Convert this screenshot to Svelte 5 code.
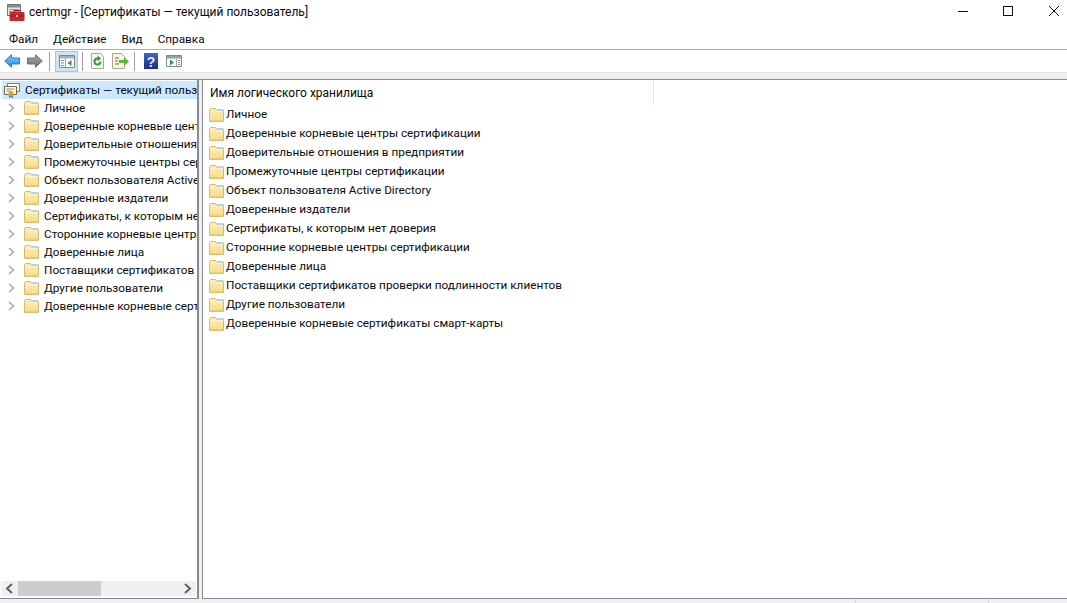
<script>
  const tree = ['Личное','Доверенные корневые центры сертификации','Доверительные отношения в предприятии','Промежуточные центры сертификации','Объект пользователя Active Directory','Доверенные издатели','Сертификаты, к которым нет доверия','Сторонние корневые центры сертификации','Доверенные лица','Поставщики сертификатов проверки подлинности клиентов','Другие пользователи','Доверенные корневые сертификаты смарт-карты'];
  const menu = ['Файл','Действие','Вид','Справка'];
</script>

{#snippet folder()}
  <svg class="folder" width="15" height="14" viewBox="0 0 15 14">
    <path d="M.5 13.500V1.500l1-1h5l1 1.500h7v11.500z" fill="url(#fg)" stroke="#d6bb78"/>
    <path d="M8 1h6v2H8z" fill="#b4d3e8"/>
    <path d="M1 3.500h13" stroke="#fff3c8"/>
    <path d="M1 13h13" stroke="#e0c070"/>
  </svg>
{/snippet}

<svg class="defs" width="0" height="0" aria-hidden="true">
  <defs>
    <linearGradient id="fg" x1="0" y1="0" x2="0" y2="1"><stop offset="0" stop-color="#fbeeb8"/><stop offset="1" stop-color="#f7dc88"/></linearGradient>
    <linearGradient id="bl" x1="0" y1="0" x2="0" y2="1"><stop offset="0" stop-color="#8ed2fa"/><stop offset="1" stop-color="#1b86dc"/></linearGradient>
    <linearGradient id="gr" x1="0" y1="0" x2="0" y2="1"><stop offset="0" stop-color="#b0b0b0"/><stop offset="1" stop-color="#6c6c6c"/></linearGradient>
    <linearGradient id="hp" x1="0" y1="0" x2="0" y2="1"><stop offset="0" stop-color="#3f66c8"/><stop offset="1" stop-color="#16308a"/></linearGradient>
  </defs>
</svg>

<div class="win">
  <header class="title">
    <svg class="appicon" width="18" height="17" viewBox="0 0 18 17">
      <path d="M.5 .5h13v11H.5z" fill="#e8e8e8" stroke="#777"/>
      <path d="M1 1h12v2.500H1z" fill="#8a8a8a"/>
      <path d="M2 5.500h10M2 7.500h10" stroke="#9a9a9a"/>
      <path d="M7 9V6.500h6V9" fill="none" stroke="#8d1a1a"/>
      <rect x="2.500" y="8" width="15" height="9" rx="1" fill="#c62b2b"/>
      <path d="M3 12h14" stroke="#8d1a1a"/>
      <path d="M9 11h2v2H9z" fill="#e8b0a0"/>
    </svg>
    <span class="ttext">certmgr - [Сертификаты — текущий пользователь]</span>
    <div class="caption">
      <svg width="46" height="30" viewBox="0 0 46 30"><path d="M19 11.500h10" stroke="#111"/></svg>
      <svg width="46" height="30" viewBox="0 0 46 30"><rect x="18.500" y="6.500" width="9" height="9" fill="none" stroke="#111"/></svg>
      <svg width="36" height="30" viewBox="0 0 36 30"><path d="M18 6l10 10M28 6L18 16" stroke="#111"/></svg>
    </div>
  </header>

  <nav class="menu">
    {#each menu as m}<span>{m}</span>{/each}
  </nav>

  <div class="toolbar">
    <svg class="tb" width="16" height="14" viewBox="0 0 16 14"><path d="M.7 7L7.500.8V4h8v6h-8v3.200z" fill="url(#bl)" stroke="#2a7fc0"/></svg>
    <svg class="tb g1" width="16" height="14" viewBox="0 0 16 14"><path d="M15.300 7L8.500.8V4h-8v6h8v3.200z" fill="url(#gr)" stroke="#707070"/></svg>
    <i class="sep s1"></i>
    <div class="active">
      <svg width="16" height="13" viewBox="0 0 16 13"><path d="M.5 .5h15v12H.5z" fill="#fff" stroke="#7f8794"/><path d="M1 1h14v2.500H1z" fill="#aab0b8"/><path d="M2 5h3v1H2zM2 7.500h3v1H2zM2 10h3v1H2z" fill="#7f8794"/><path d="M6.500 3.500v9" stroke="#9aa0a8"/><path d="M12.500 5v6l-4-3z" fill="#2d9a3a"/></svg>
    </div>
    <i class="sep s2"></i>
    <svg class="tb g2" width="13" height="16" viewBox="0 0 13 16"><path d="M.5 .5h9l3 3v12H.5z" fill="#fbfbf3" stroke="#a5a5a0"/><path d="M6.500 4.500a4 4 0 1 0 4 4H8.500a2 2 0 1 1-2-2v2l3.500-3-3.500-3z" fill="#2c9c3c"/></svg>
    <svg class="tb g3" width="17" height="16" viewBox="0 0 17 16"><path d="M.5 .5h9l3 3v12H.5z" fill="#fbf6dc" stroke="#aaa69a"/><path d="M3 5h4M3 8h3M3 11h4" stroke="#666"/><path d="M7 7h5V4l5 4.500-5 4.500v-3H7z" fill="#5cb83c"/></svg>
    <i class="sep s3"></i>
    <svg class="tb g4" width="14" height="16" viewBox="0 0 14 16"><path d="M0 0h14v16H0z" fill="url(#hp)"/><text x="7" y="13.500" text-anchor="middle" fill="#e8ecff" class="q">?</text></svg>
    <svg class="tb g5" width="16" height="12" viewBox="0 0 16 12"><path d="M.5 .5h15v11H.5z" fill="#fff" stroke="#7f8794"/><path d="M1 1h14v2.500H1z" fill="#99a0a8"/><path d="M10.500 3.500v8" stroke="#9aa0a8"/><path d="M12 5h2v1h-2zM12 7h2v1h-2zM12 9h2v1h-2z" fill="#7f8794"/><path d="M4 4.500v6l4-3z" fill="#2d9a3a"/></svg>
  </div>
  <div class="strip"></div>

  <main class="panes">
    <section class="left">
      <div class="treewrap">
        <div class="root">
          <svg width="16" height="15" viewBox="0 0 16 15"><path d="M3.500 .5h12v8h-12z" fill="#fdf9ec" stroke="#8a7a50"/><path d="M.5 3.500h12v8H.5z" fill="#fdf8e8" stroke="#7a6a40"/><path d="M2.500 6h8M2.500 8h4" stroke="#888"/><path d="M5 11h4v4l-2-1-2 1z" fill="#3f7fc8"/><circle cx="7" cy="10.500" r="2.500" fill="#e8a020"/></svg>
          <span>Сертификаты — текущий пользователь</span>
        </div>
        {#each tree as t}
          <div class="node">
            <svg class="chev" width="7" height="10" viewBox="0 0 7 10"><path d="M1 1l4.500 4L1 9" fill="none" stroke="#a6a6a6" stroke-width="1.500"/></svg>
            {@render folder()}
            <span>{t}</span>
          </div>
        {/each}
      </div>
      <div class="hscroll">
        <svg width="17" height="15" viewBox="0 0 17 15"><path d="M11 3L6 7.500l5 4.500" fill="none" stroke="#606060" stroke-width="2"/></svg>
        <div class="track"><div class="thumb"></div></div>
        <svg width="17" height="15" viewBox="0 0 17 15"><path d="M6 3l5 4.500L6 12" fill="none" stroke="#606060" stroke-width="2"/></svg>
      </div>
    </section>
    <section class="right">
      <div class="colhead"><span>Имя логического хранилища</span></div>
      <div class="list">
        {#each tree as t}
          <div class="item">{@render folder()}<span>{t}</span></div>
        {/each}
      </div>
    </section>
  </main>
  <footer class="status"><i></i><i></i></footer>
</div>

<style>
  :global(body) { margin: 0; background: #fff; }
  .defs { position: absolute; }
  .win { width: 1067px; height: 603px; display: flex; flex-direction: column; overflow: hidden; font-family: Roboto, sans-serif; font-size: 11.75px; color: #0a0a0a; background: #f0f0f0; }
  .title { height: 30px; flex: none; background: #fff; display: flex; align-items: center; padding-left: 7px; font-size: 12px; }
  .appicon { margin-top: -5px; margin-right: 4px; flex: none; }
  .ttext { margin-top: -6px; }
  .caption { margin-left: auto; display: flex; align-self: flex-start; }
  .caption svg { display: block; }
  .menu { height: 17px; padding-bottom: 2px; flex: none; background: #fff; border-bottom: 1px solid #aeaeb4; display: flex; align-items: center; padding-left: 9px; gap: 15px; }
  .toolbar { height: 22px; flex: none; background: #fff; display: flex; align-items: center; border-bottom: 1px solid #e4e4e4; padding-left: 4px; }
  .tb { flex: none; display: block; }
  .g1 { margin-left: 7px; }
  .sep { width: 1px; height: 19px; background: #a0a0a0; flex: none; }
  .s1 { margin-left: 6px; }
  .active { width: 23px; height: 21px; margin-left: 5px; background: #cce4f7; border: 1px solid #9cc8ea; box-sizing: border-box; display: flex; align-items: center; justify-content: center; flex: none; }
  .s2 { margin-left: 4px; }
  .g2 { margin-left: 8px; }
  .g3 { margin-left: 8px; }
  .s3 { margin-left: 5px; }
  .g4 { margin-left: 9px; }
  .g5 { margin-left: 8px; }
  .q { font: bold 14px "Liberation Sans", sans-serif; }
  .strip { height: 6px; flex: none; background: #f0f0f0; border-bottom: 1px solid #8a8a94; }
  .panes { flex: 1; min-height: 0; display: flex; gap: 3px; }
  .left { width: 199px; box-sizing: border-box; flex: none; background: #fff; border-right: 2px solid #8a8a94; border-bottom: 1px solid #8a8a94; display: flex; flex-direction: column; }
  .right { flex: 1; background: #fff; border-left: 1px solid #8a8a94; border-bottom: 1px solid #8a8a94; min-width: 0; }
  .treewrap { flex: 1; min-height: 0; overflow: hidden; padding: 1px 0 0 2px; }
  .root { height: 18px; background: #cce8ff; display: flex; align-items: center; gap: 5px; padding-left: 2px; white-space: nowrap; overflow: hidden; }
  .root svg { flex: none; }
  .root span { margin-top: -1px; }
  .node { height: 18px; display: flex; align-items: center; white-space: nowrap; padding-left: 6px; }
  .chev { flex: none; margin-right: 9px; }
  .folder { flex: none; display: block; }
  .node span { margin-left: 5px; margin-top: -1px; }
  .hscroll { height: 15px; margin: 0 1px 2px 1px; background: #f0f0f0; display: flex; align-items: center; flex: none; }
  .hscroll svg { flex: none; }
  .track { flex: 1; height: 15px; }
  .thumb { width: 83px; height: 15px; background: #cdcdcd; }
  .colhead { height: 25px; width: 451px; border-right: 1px solid #e5e5e5; box-sizing: border-box; display: flex; align-items: center; padding-left: 7px; font-size: 12px; }
  .list { padding: 0 0 0 6px; }
  .item { height: 19px; display: flex; align-items: center; gap: 2px; }
  .item span { margin-top: -1px; }
  .status { height: 4px; flex: none; display: flex; }
  .status i { display: block; width: 1px; height: 4px; background: #d8d8d8; margin-left: 855px; }
  .status i + i { margin-left: 132px; }
</style>
